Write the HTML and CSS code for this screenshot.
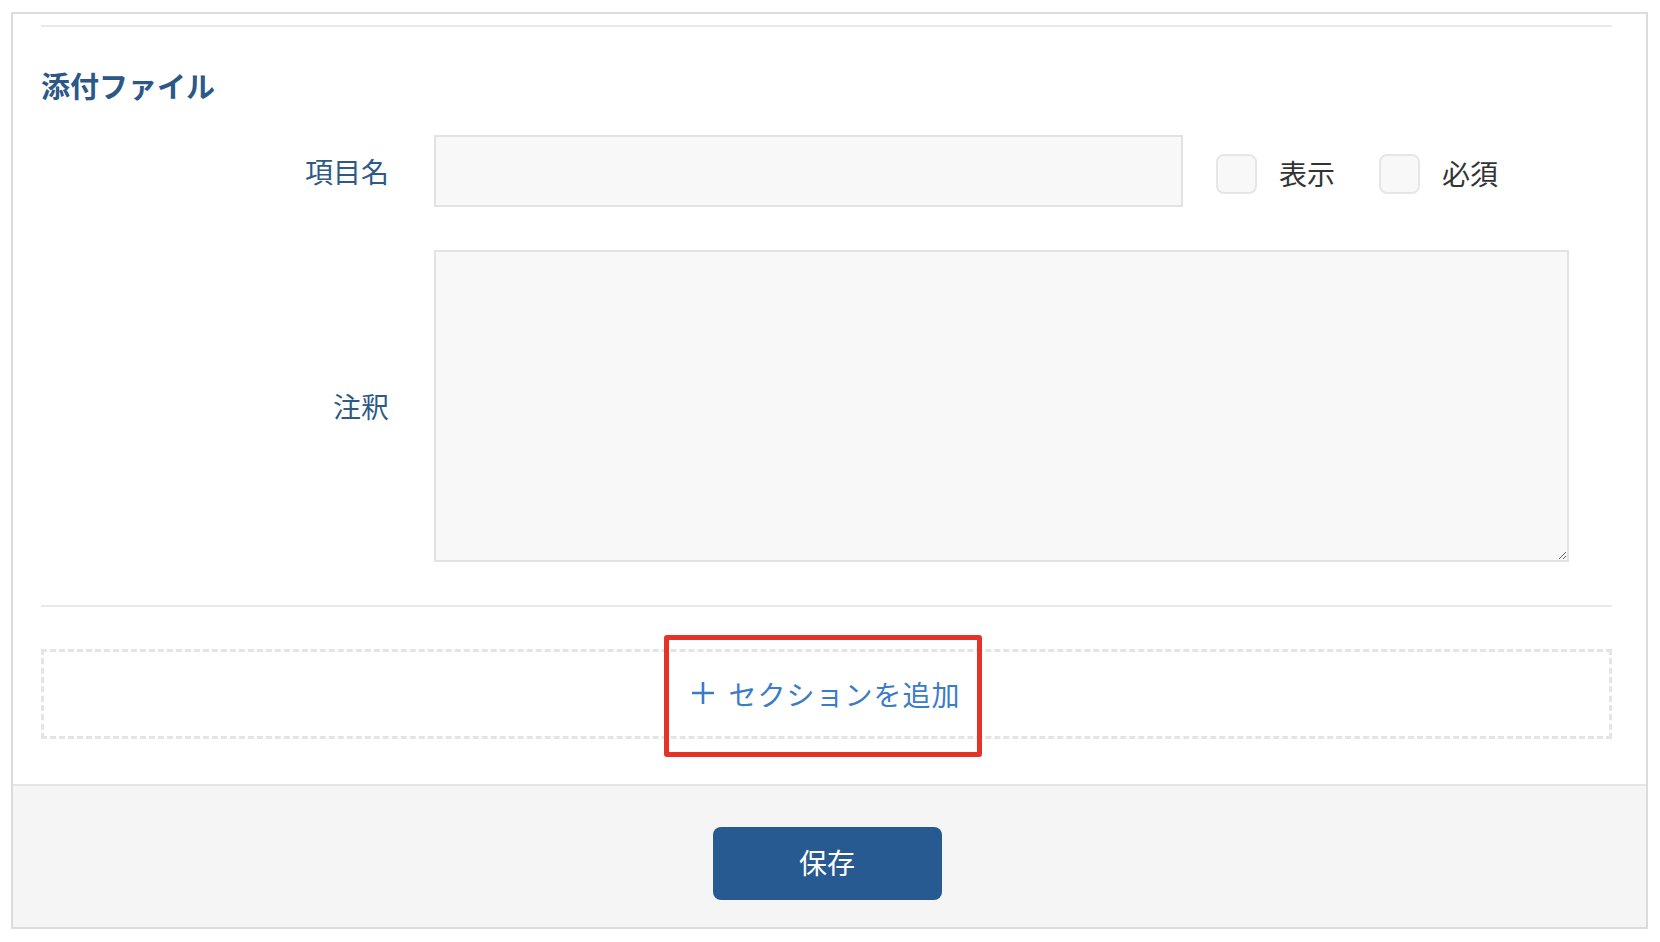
FILE: index.html
```html
<!DOCTYPE html>
<html lang="ja">
<head>
<meta charset="utf-8">
<title>添付ファイル</title>
<link rel="stylesheet" href="styles.css">
</head>
<body>
<div class="card">
  <div class="card-body">
    <div class="top-line"></div>
    <h2 class="section-title">添付ファイル</h2>
    <div class="form-row">
      <label class="form-label">項目名</label>
      <div class="field-line">
        <input class="text-input" type="text">
        <span class="check"><span class="check-box"></span><span class="check-text">表示</span></span>
        <span class="check"><span class="check-box"></span><span class="check-text">必須</span></span>
      </div>
    </div>
    <div class="form-row form-row-note">
      <label class="form-label">注釈</label>
      <textarea class="note-input"></textarea>
    </div>
    <div class="divider"></div>
    <div class="add-section">
      <span class="add-text"><svg class="plus" width="22" height="22" viewBox="0 0 22 22"><path d="M11 0V22M0 11H22" stroke="#3b7cc8" stroke-width="2.6" fill="none"/></svg><span class="add-label">セクションを追加</span></span>
      <div class="highlight"></div>
    </div>
  </div>
  <div class="card-footer">
    <button class="save-btn" type="button">保存</button>
  </div>
</div>
</body>
</html>
```

FILE: styles.css
```css
* { box-sizing: border-box; }
html, body { margin: 0; padding: 0; background: #fff; }
body {
  font-family: "Noto Sans CJK JP", "Noto Sans", sans-serif;
  color: #333;
}
.card {
  margin: 12px 12px 0 11px;
  border: 2px solid #dcdcdc;
  background: #fff;
}
.card-body {
  padding: 11px 34px 45px 28px;
}
.top-line {
  height: 2px;
  background: #e9e9e9;
}
.section-title {
  margin: 38px 0 30px;
  font-size: 29px;
  line-height: 40px;
  font-weight: 700;
  color: #2b5886;
}
.form-row {
  display: grid;
  grid-template-columns: 348px 1fr;
  column-gap: 45px;
  align-items: center;
}
.form-row-note { margin-top: 43px; }
.form-label {
  text-align: right;
  font-size: 28px;
  line-height: 40px;
  color: #2d5a86;
}
.field-line {
  display: flex;
  align-items: center;
}
.text-input {
  width: 749px;
  height: 72px;
  border: 2px solid #e2e2e2;
  background: #f8f8f8;
  outline: none;
  margin: 0;
}
.check {
  display: flex;
  align-items: center;
  margin-left: 33px;
}
.check + .check { margin-left: 44px; }
.check-box {
  width: 41px;
  height: 40px;
  border: 2px solid #e6e6e6;
  border-radius: 8px;
  background: #f8f8f8;
  margin-top: 5px;
}
.check-text {
  margin-left: 22px;
  font-size: 28px;
  line-height: 40px;
  color: #333;
  margin-top: 4px;
}
.note-input {
  display: block;
  width: 1135px;
  height: 312px;
  border: 2px solid #e2e2e2;
  background: #f8f8f8;
  outline: none;
  resize: vertical;
  margin: 0;
}
.divider {
  margin-top: 43px;
  height: 2px;
  background: #e9e9e9;
}
.add-section {
  position: relative;
  margin-top: 42px;
  height: 90px;
  border: 3px dashed #e4e4e4;
  display: flex;
  align-items: center;
  justify-content: center;
}
.add-text {
  display: flex;
  align-items: center;
  font-size: 28px;
  line-height: 40px;
  color: #3b7cc8;
}
.plus {
  display: block;
  margin-right: 14px;
  margin-top: -2px;
}
.add-label {
  letter-spacing: 1px;
}
.highlight {
  position: absolute;
  left: 620px;
  top: -17px;
  width: 318px;
  height: 122px;
  border: 5px solid #e5332a;
  border-radius: 3px;
}
.card-footer {
  border-top: 2px solid #e6e6e6;
  background: #f5f5f5;
  padding: 41px 0 27px;
  display: flex;
  justify-content: center;
}
.save-btn {
  width: 229px;
  height: 73px;
  border: none;
  border-radius: 8px;
  background: #265a91;
  color: #fff;
  font-family: "Noto Sans CJK JP", sans-serif;
  font-size: 28px;
  line-height: 40px;
  padding: 0 0 4px;
  margin-left: -5px;
}
```
